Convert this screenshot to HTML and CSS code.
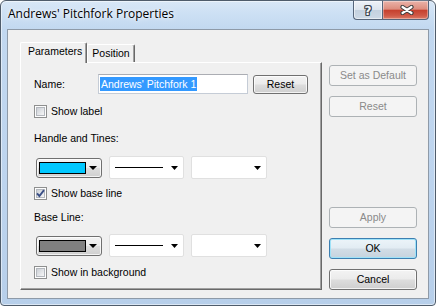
FILE: index.html
```html
<!DOCTYPE html>
<html>
<head>
<meta charset="utf-8">
<title>Andrews' Pitchfork Properties</title>
<link rel="stylesheet" href="styles.css">
</head>
<body>
<div class="window">
  <div class="titlebar">
    <span class="title">Andrews' Pitchfork Properties</span>
    <div class="caption-buttons">
      <div class="cbtn help"><span class="q">?</span></div>
      <div class="cbtn close">
        <svg width="14" height="10" viewBox="0 0 14 10">
          <path d="M2.5 2 L11.5 8 M11.5 2 L2.5 8" stroke="#3d3d3d" stroke-width="4.2" stroke-linecap="round" fill="none"/>
          <path d="M2.5 2 L11.5 8 M11.5 2 L2.5 8" stroke="#ffffff" stroke-width="2.2" stroke-linecap="round" fill="none"/>
        </svg>
      </div>
    </div>
  </div>
  <div class="client">
    <div class="tabs-col">
      <div class="tabstrip">
        <div class="tab active">Parameters</div>
        <div class="tab">Position</div>
      </div>
      <div class="panel">
        <div class="row name-row">
          <span class="name-label">Name:</span>
          <div class="textbox"><span class="sel">Andrews' Pitchfork 1</span></div>
          <div class="btn small">Reset</div>
        </div>
        <div class="row check-row r-showlabel">
          <span class="cb"><span class="cb-in"></span></span>
          <span>Show label</span>
        </div>
        <div class="row text-row r-handle">Handle and Tines:</div>
        <div class="row combo-row r-combo1">
          <div class="color-combo">
            <span class="swatch cyan"></span>
            <svg class="arr carr" width="8" height="4" viewBox="0 0 8 4"><path d="M0 0H8L4 4Z"/></svg>
          </div>
          <div class="combo line-combo">
            <span class="line"></span>
            <svg class="arr" width="7" height="4" viewBox="0 0 7 4"><path d="M0 0H7L3.5 4Z"/></svg>
          </div>
          <div class="combo width-combo">
            <svg class="arr" width="7" height="4" viewBox="0 0 7 4"><path d="M0 0H7L3.5 4Z"/></svg>
          </div>
        </div>
        <div class="row check-row r-showbase">
          <span class="cb"><span class="cb-in"></span>
            <svg class="tick" width="13" height="13" viewBox="0 0 13 13"><path d="M3 6.3 L5.4 9 L10 3.2" stroke="#3a4f86" stroke-width="1.9" fill="none"/></svg>
          </span>
          <span>Show base line</span>
        </div>
        <div class="row text-row r-baseline">Base Line:</div>
        <div class="row combo-row r-combo2">
          <div class="color-combo">
            <span class="swatch gray"></span>
            <svg class="arr carr" width="8" height="4" viewBox="0 0 8 4"><path d="M0 0H8L4 4Z"/></svg>
          </div>
          <div class="combo line-combo">
            <span class="line"></span>
            <svg class="arr" width="7" height="4" viewBox="0 0 7 4"><path d="M0 0H7L3.5 4Z"/></svg>
          </div>
          <div class="combo width-combo">
            <svg class="arr" width="7" height="4" viewBox="0 0 7 4"><path d="M0 0H7L3.5 4Z"/></svg>
          </div>
        </div>
        <div class="row check-row r-showbg">
          <span class="cb"><span class="cb-in"></span></span>
          <span>Show in background</span>
        </div>
      </div>
    </div>
    <div class="btn-col">
      <div class="group top-group">
        <div class="btn disabled">Set as Default</div>
        <div class="btn disabled">Reset</div>
      </div>
      <div class="group">
        <div class="btn disabled">Apply</div>
        <div class="btn default">OK</div>
        <div class="btn">Cancel</div>
      </div>
    </div>
  </div>
</div>
</body>
</html>
```
FILE: styles.css
```css
* { box-sizing: border-box; }
html, body { margin: 0; padding: 0; background: #ffffff; }
body {
  width: 436px;
  height: 306px;
  overflow: hidden;
  font-family: "Liberation Sans", Arial, sans-serif;
  font-size: 10.5px;
  color: #000;
}

.window {
  width: 436px;
  height: 306px;
  border: 1px solid #4f5c6b;
  border-radius: 6px 6px 4px 4px;
  background: linear-gradient(180deg, #d9e8f7 0px, #cde0f4 12px, #c2d8f0 28px, #bdd4ee 60%, #b7cfea 100%);
  box-shadow: inset 0 0 0 1px rgba(255, 255, 255, 0.5);
  padding: 0 6px 6px 6px;
  display: flex;
  flex-direction: column;
}

.titlebar {
  height: 28px;
  display: flex;
  align-items: flex-start;
}
.title {
  font-family: "Open Sans", "Noto Sans", sans-serif;
  font-size: 12px;
  line-height: 16px;
  margin: 5px 0 0 1px;
  color: #000;
  text-shadow: 0 0 6px rgba(255,255,255,0.9), 0 0 3px rgba(255,255,255,0.9);
}
.caption-buttons {
  margin-left: auto;
  margin-top: -1px;
  display: flex;
  height: 20px;
}
.cbtn {
  height: 20px;
  border: 1px solid #56657a;
  border-top-color: #6a7889;
  display: flex;
  align-items: center;
  justify-content: center;
}
.help {
  width: 29px;
  border-right: none;
  border-radius: 0 0 0 4px;
  background: linear-gradient(180deg, #eef2f8 0%, #dde5ee 48%, #c4d1df 52%, #cdd9e6 100%);
  box-shadow: inset 0 0 0 1px rgba(255,255,255,0.5);
}
.q {
  font-family: "DejaVu Sans", sans-serif;
  font-weight: bold;
  font-size: 12px;
  line-height: 12px;
  color: #f4f6f8;
  margin-top: 1px;
  text-shadow: 1px 0 0 #3e4650, -1px 0 0 #3e4650, 0 1px 0 #3e4650, 0 -1px 0 #3e4650,
               1px 1px 0 #3e4650, -1px -1px 0 #3e4650, 1px -1px 0 #3e4650, -1px 1px 0 #3e4650;
}
.close {
  width: 47px;
  border-radius: 0 0 4px 0;
  background: linear-gradient(180deg, #eab3a9 0%, #dd8d7e 45%, #c6412f 52%, #cf5846 80%, #dc7a66 100%);
  box-shadow: inset 0 0 0 1px rgba(255,255,255,0.35);
  padding-left: 3px;
}

.client {
  flex: 1;
  background: #f0f0f0;
  border: 1px solid #8e9aa8;
  padding: 12px 11px 8px 12px;
  display: flex;
  gap: 7px;
}

.tabs-col {
  width: 302px;
  display: flex;
  flex-direction: column;
}
.tabstrip {
  height: 20px;
  display: flex;
  align-items: flex-end;
  position: relative;
  z-index: 1;
}
.tab {
  height: 18px;
  width: 48px;
  border: 1px solid;
  border-color: #ffffff #696969 transparent #ffffff;
  border-bottom: none;
  border-radius: 2px 2px 0 0;
  box-shadow: inset -1px 0 0 #a0a0a0;
  background: #f0f0f0;
  line-height: 17px;
  text-align: center;
}
.tab.active {
  height: 21px;
  width: 67px;
  margin-bottom: -1px;
  text-align: left;
  padding-left: 7px;
}

.panel {
  height: 228px;
  border: 1px solid;
  border-color: #ffffff #696969 #696969 #ffffff;
  box-shadow: inset -1px -1px 0 #a0a0a0;
  padding-left: 13px;
  display: flex;
  flex-direction: column;
}
.row { display: flex; align-items: center; }
.text-row { height: 13px; line-height: 13px; }
.check-row { height: 13px; gap: 4px; line-height: 13px; }
.combo-row { height: 23px; margin-left: 2px; gap: 7px; }

.name-row { height: 20px; margin-top: 11px; }
.r-showlabel { margin-top: 11px; }
.r-handle { margin-top: 14px; }
.r-combo1 { margin-top: 11px; }
.r-showbase { margin-top: 8px; }
.r-baseline { margin-top: 11px; }
.r-combo2 { margin-top: 10px; }
.r-showbg { margin-top: 9px; }

.name-label { width: 64px; }
.textbox {
  width: 150px;
  height: 20px;
  border: 1px solid #c5ccd6;
  border-top-color: #abadb3;
  background: #fff;
  padding-left: 1px;
  display: flex;
  align-items: center;
}
.sel {
  background: #3399ff;
  color: #fff;
  line-height: 14px;
  height: 14px;
  padding: 0 1px 0 1px;
  white-space: nowrap;
}

.btn {
  height: 21px;
  border: 1px solid #707070;
  border-radius: 3px;
  background: linear-gradient(180deg, #f3f3f3 0%, #ebebeb 48%, #dddddd 52%, #cfcfcf 100%);
  box-shadow: inset 0 0 0 1px rgba(255,255,255,0.75);
  display: flex;
  align-items: center;
  justify-content: center;
  line-height: 13px;
  white-space: nowrap;
}
.btn.small {
  width: 55px;
  height: 19px;
  margin-left: 5px;
}
.btn.disabled {
  border-color: #adb2b5;
  background: #f4f4f4;
  box-shadow: none;
  color: #8a8a8a;
}
.btn.default {
  border-color: #3c7fb1;
  background: linear-gradient(180deg, #ecf4f9 0%, #e2ecf3 48%, #d2dde6 52%, #c6d3de 100%);
  box-shadow: inset 0 0 0 1px #9fe2f8;
}

.btn-col {
  width: 88px;
  display: flex;
  flex-direction: column;
  justify-content: space-between;
}
.group { display: flex; flex-direction: column; gap: 10px; }
.top-group { margin-top: 23px; }

.cb {
  position: relative;
  width: 13px;
  height: 13px;
  border: 1px solid #8e8f8f;
  background: #fdfdfd;
  padding: 1px;
  flex: none;
}
.cb-in {
  display: block;
  width: 9px;
  height: 9px;
  border: 1px solid #b4b8be;
  background: linear-gradient(135deg, #cbcfd5 0%, #e3e5e8 55%, #f6f6f6 100%);
}
.tick {
  position: absolute;
  left: -1px;
  top: -1px;
}

.color-combo {
  width: 66px;
  height: 20px;
  border: 1px solid #707070;
  border-radius: 3px;
  background: linear-gradient(180deg, #f3f3f3 0%, #ebebeb 48%, #dddddd 52%, #cfcfcf 100%);
  box-shadow: inset 0 0 0 1px rgba(255,255,255,0.75);
  display: flex;
  align-items: center;
  padding-left: 2px;
}
.swatch {
  width: 47px;
  height: 12px;
  border: 1px solid #000;
}
.swatch.cyan { background: #00c8ff; }
.swatch.gray { background: #808080; }
.arr { display: block; fill: #000; flex: none; }
.carr { margin-left: 3px; }

.combo {
  height: 23px;
  border: 1px solid #e0e0e0;
  border-radius: 2px;
  background: #fff;
  display: flex;
  align-items: center;
  padding-right: 5px;
}
.combo .arr { margin-left: auto; }
.line-combo { width: 75px; padding-left: 5px; }
.width-combo { width: 76px; }
.line {
  display: block;
  width: 48px;
  height: 1px;
  background: #000;
}
```
